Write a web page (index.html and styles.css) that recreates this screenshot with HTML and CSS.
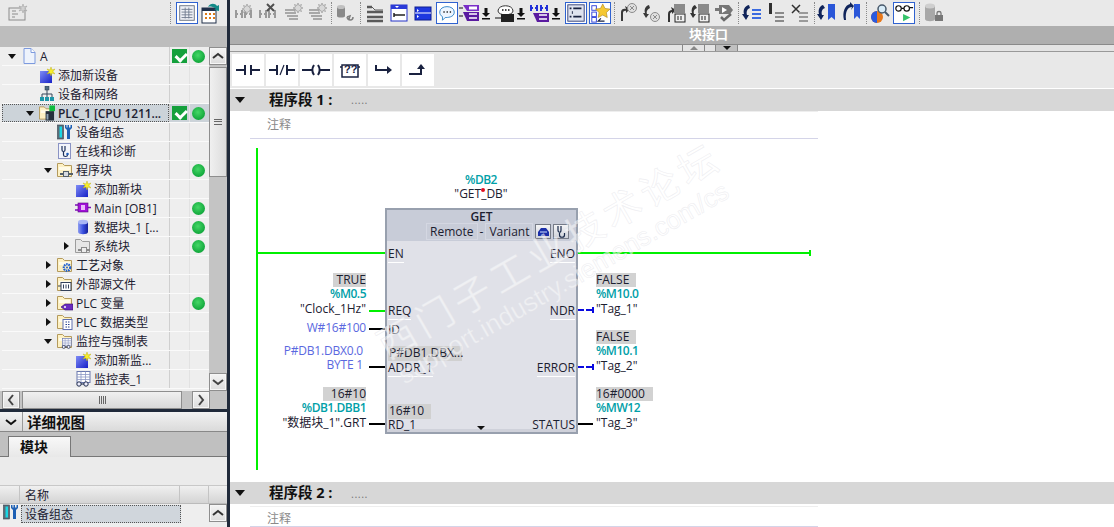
FILE: index.html
```html
<!DOCTYPE html>
<html lang="zh-CN">
<head>
  <meta charset="utf-8">
  <title>TIA Portal - GET</title>
  <link rel="stylesheet" href="styles.css">
</head>
<body>
  <svg class="defs" width="0" height="0">
    <defs>
      <linearGradient id="blue" x1="0" y1="0" x2="1" y2="1"><stop offset="0" stop-color="#7f8cf5"/><stop offset="1" stop-color="#1620c8"/></linearGradient>
      <linearGradient id="cyl" x1="0" y1="0" x2="1" y2="0"><stop offset="0" stop-color="#8d9cf0"/><stop offset=".5" stop-color="#3a50e0"/><stop offset="1" stop-color="#14209a"/></linearGradient>
      <symbol id="i-doc" viewBox="0 0 16 16"><path d="M3 .5h7l4 4v11H3z" fill="#eef3fc" stroke="#7d9ade"/><path d="M10 .5v4h4" fill="#fff" stroke="#7d9ade"/></symbol>
      <symbol id="i-add" viewBox="0 0 16 16"><rect x="1" y="4" width="12" height="12" fill="url(#blue)"/><path d="M12 0l1 3 3-1-2 2.500 2 2.500-3-1-1 3-1-3-3 1 2-2.500-2-2.500 3 1z" fill="#f7ee2c" stroke="#b9a900" stroke-width=".4"/></symbol>
      <symbol id="i-net" viewBox="0 0 16 16"><path d="M8 4v4M3 12V8h10v4M8 8v4" fill="none" stroke="#36465a"/><rect x="6" y="0" width="4" height="4" fill="#4f6a80" stroke="#26384a" stroke-width=".5"/><rect x="1" y="11" width="4" height="4" fill="#1d96a8"/><rect x="6" y="11" width="4" height="4" fill="#1d96a8"/><rect x="11" y="11" width="4" height="4" fill="#1d96a8"/></symbol>
      <symbol id="i-folder" viewBox="0 0 16 16"><path d="M.5 14.500V1.500h5l2 2h7v11z" fill="#fdf1c4" stroke="#b49a5c"/><path d="M2 5h11v3H2z" fill="#fffbe8"/></symbol>
      <symbol id="i-plc" viewBox="0 0 17 16"><use href="#i-folder" width="16" height="16"/><rect x="7" y="6" width="9" height="10" fill="#25303c"/><rect x="8" y="9" width="2" height="6" fill="#8fa4b5"/><rect x="11" y="0" width="6" height="6" fill="#0dbb3c"/></symbol>
      <symbol id="i-cfg" viewBox="0 0 16 16"><rect x=".5" y="1" width="6" height="14" fill="#5b6c78" stroke="#33424e" stroke-width=".6"/><rect x="2.500" y="2.500" width="2.500" height="11" fill="#19d6e4"/><path d="M8 1v3l2 2v9h3V6l2-2V1l-1.500 0v2.500h-1.500V1h-1.500v2.500H9.500V1z" fill="#1e60b4"/></symbol>
      <symbol id="i-diag" viewBox="0 0 16 16"><rect x="1.500" y=".5" width="12" height="15" fill="#f2f4fb" stroke="#8a93c4"/><path d="M5 3v4c0 2 3 2 3 0V3M6.500 9v3c0 2 4 2 4 0" fill="none" stroke="#1c2f5a" stroke-width="1.200"/><circle cx="10.500" cy="11" r="1.300" fill="#1c5ab8"/></symbol>
      <symbol id="i-prog" viewBox="0 0 16 16"><use href="#i-folder" width="16" height="16"/><path d="M3 11h3v-2h6v2h4v2h-4v2H6v-2H3z" fill="#55606a"/><rect x="7" y="10" width="4" height="4" fill="#d8dce0"/></symbol>
      <symbol id="i-main" viewBox="0 0 16 16"><path d="M0 5h4M0 10h4M12 7.500h4" stroke="#7d10b8" stroke-width="1.500"/><rect x="3" y="3" width="10" height="9" fill="#a210d8" stroke="#560a80" stroke-width=".6"/><rect x="6" y="5" width="4" height="5" fill="#e9b8fb"/></symbol>
      <symbol id="i-db" viewBox="0 0 16 16"><path d="M3 3v10c0 3 10 3 10 0V3z" fill="url(#cyl)"/><ellipse cx="8" cy="3" rx="5" ry="2.300" fill="#a9b6f5"/></symbol>
      <symbol id="i-sys" viewBox="0 0 16 16"><path d="M.5 14.500V1.500h5l2 2h7v11z" fill="#e6e6e6" stroke="#9c9c9c"/><path d="M3 11h3v-2h6v2h3v2h-3v2H6v-2H3z" fill="#8a8a8a"/><rect x="7" y="10" width="4" height="4" fill="#ececec"/></symbol>
      <symbol id="i-tech" viewBox="0 0 16 16"><use href="#i-folder" width="16" height="16"/><circle cx="10" cy="10.500" r="3.200" fill="none" stroke="#1d5ed0" stroke-width="2.200" stroke-dasharray="1.600 .7"/><circle cx="10" cy="10.500" r="1" fill="#1d5ed0"/></symbol>
      <symbol id="i-src" viewBox="0 0 16 16"><use href="#i-folder" width="16" height="16"/><path d="M1 10h3" stroke="#33415a"/><rect x="4" y="6.500" width="10" height="8" fill="#fff" stroke="#33415a"/><path d="M6.500 8.500v4M9 8.500v4M11.500 8.500v4" stroke="#33415a"/></symbol>
      <symbol id="i-tag" viewBox="0 0 16 16"><use href="#i-folder" width="16" height="16"/><path d="M4 12l4-3h8v6H8z" fill="#6a2cc0" stroke="#37106e" stroke-width=".6"/><circle cx="8" cy="12" r="1" fill="#fff"/></symbol>
      <symbol id="i-type" viewBox="0 0 16 16"><use href="#i-folder" width="16" height="16"/><rect x="6" y="5.500" width="9" height="10" fill="#fff" stroke="#6070b0"/><path d="M8.500 8h4M8.500 10.500h4M8.500 13h4" stroke="#24408c" stroke-dasharray="1.500 1"/></symbol>
      <symbol id="i-table" viewBox="0 0 16 16"><rect x="2" y=".5" width="13" height="11" fill="#fff" stroke="#6a78ae"/><path d="M2 3.500h13M2 6h13M2 8.500h13M6 .5v11M10.500.5v11" stroke="#8b97c4" stroke-width=".8"/><circle cx="4" cy="13" r="2.200" fill="#eef" stroke="#1d2a4a"/><circle cx="11" cy="13" r="2.200" fill="#eef" stroke="#1d2a4a"/><path d="M6 13h3" stroke="#1d2a4a"/></symbol>
      <symbol id="i-watch" viewBox="0 0 16 16"><use href="#i-folder" width="16" height="16"/><use href="#i-table" x="3" y="5" width="13" height="11"/></symbol>

      <symbol id="t-gray-star" viewBox="0 0 22 22"><rect x="3" y="6" width="16" height="12" fill="#e8e8e8" stroke="#8c8c8c"/><path d="M6 9h4M6 12h6M6 15h3" stroke="#8c8c8c"/><path d="M17 2l1 3 3-1-2 2.500 2 2.500-3-1-1 3-1-3-3 1 2-2.500-2-2.500 3 1z" fill="#d0d0d0" stroke="#9a9a9a" stroke-width=".5"/></symbol>
      <symbol id="t-list" viewBox="0 0 22 22"><rect x="3" y="3" width="16" height="16" fill="#eef0f5" stroke="#666f80"/><path d="M5 7h12M5 10h12M5 13h12M5 16h12M9 5v12M13 5v12" stroke="#727c90"/></symbol>
      <symbol id="t-export" viewBox="0 0 22 22"><rect x="2" y="6" width="14" height="15" fill="#fff" stroke="#20304a"/><rect x="2" y="6" width="14" height="3" fill="#20304a"/><path d="M5 11h2v2H5zM9 11h2v2H9zM13 11h2v2h-2zM5 15h2v2H5zM9 15h2v2H9zM13 15h2v2h-2z" fill="#dc7a18"/><path d="M8 5C10 1 15 1 17 4l2-1v6l-5-1 2-1c-2-2-5-3-8-2z" fill="#128a88"/></symbol>
      <symbol id="t-bstar" viewBox="0 0 22 22"><path d="M2 8v8M8 8v8M2 12h2M6 12h2M11 8v8M17 8v8M11 12h2M15 12h2" stroke="#9a9a9a" stroke-width="2"/><path d="M13 2l1 2.500 2.500-1-1 2.500 2.500 1-2.500 1 1 2.500-2.500-1-1 2.500-1-2.500-2.500 1 1-2.500-2.500-1 2.500-1-1-2.500 2.500 1z" fill="#d8d8d8" stroke="#909090" stroke-width=".6"/></symbol>
      <symbol id="t-bx" viewBox="0 0 22 22"><path d="M2 8v8M8 8v8M2 12h2M6 12h2M11 8v8M17 8v8M11 12h2M15 12h2" stroke="#9a9a9a" stroke-width="2"/><path d="M9 2l7 7M16 2l-7 7" stroke="#505050" stroke-width="2"/></symbol>
      <symbol id="t-lstar" viewBox="0 0 22 22"><path d="M3 8h11M3 11h11M5 14h11M7 17h9" stroke="#a8a8a8" stroke-width="2"/><path d="M16 1l1 2.500 2.500-1-1 2.500 2.500 1-2.500 1 1 2.500-2.500-1-1 2.500-1-2.500-2.500 1 1-2.500-2.500-1 2.500-1-1-2.500 2.500 1z" fill="#d8d8d8" stroke="#909090" stroke-width=".6"/></symbol>
      <symbol id="t-undo" viewBox="0 0 22 22"><path d="M3 5v9c0 2 8 2 8 0V5z" fill="#8a8a8a"/><ellipse cx="7" cy="5" rx="4" ry="2" fill="#c0c0c0"/><path d="M13 15c1 4 6 4 6 0M13 15l3-1-1 3" fill="none" stroke="#808080" stroke-width="1.500"/></symbol>
      <symbol id="t-lines" viewBox="0 0 22 22"><path d="M3 5h5M3 10h16M3 15h16M3 19h16" stroke="#5a5a5a" stroke-width="2.500"/><path d="M8 5l3 3h8" fill="none" stroke="#5a5a5a"/></symbol>
      <symbol id="t-net1" viewBox="0 0 22 22"><rect x="3" y="3" width="16" height="16" fill="#fff" stroke="#2433c8"/><rect x="3" y="3" width="16" height="4" fill="#2a3ad8"/><path d="M7 4l4 0-2 2z" fill="#fff"/><path d="M6 13h11M6 11v4" stroke="#222" stroke-width="1.500"/></symbol>
      <symbol id="t-net2" viewBox="0 0 22 22"><rect x="3" y="5" width="16" height="13" fill="#1e38e0" stroke="#0e1e90"/><path d="M3 11h16" stroke="#fff"/><path d="M5 7l2 1.500-2 1.500zM5 13l2 1.500-2 1.500z" fill="#fff"/></symbol>
      <symbol id="t-bubble" viewBox="0 0 22 22"><path d="M3 10c0-8 16-8 16 0 0 6-8 6-10 6l-3 3v-4c-2-1-3-3-3-5z" fill="#eef6ff" stroke="#2a80c8"/><path d="M7 10h1.500M10.500 10h1.500M14 10h1.500" stroke="#222" stroke-width="1.600"/></symbol>
      <symbol id="t-tag" viewBox="0 0 22 22"><path d="M4 3h16v6H8z" fill="#7a2fc8"/><rect x="10" y="4.500" width="8" height="3" fill="#fff"/><path d="M4 10h16v9H8z" fill="#5a1aa0"/><path d="M10 12h8M10 16h8" stroke="#fff" stroke-width="1.500"/><path d="M0 6h4M0 14h4" stroke="#111"/></symbol>
      <symbol id="t-chat" viewBox="0 0 22 22"><path d="M4 9c0-7 15-7 15 0 0 5-15 5-15 0z" fill="#fff" stroke="#333"/><path d="M8 8h1.500M11 8h1.500M14 8h1.500" stroke="#111" stroke-width="1.500"/><rect x="7" y="12" width="13" height="8" fill="#222"/><path d="M1 16h6" stroke="#111"/></symbol>
      <symbol id="t-bltag" viewBox="0 0 22 22"><path d="M2 3v6M8 3v6M2 6h2M6 6h2M12 3v6M18 3v6M12 6h2M16 6h2" stroke="#2030d8" stroke-width="2"/><path d="M4 11h16v9H8z" fill="#5a1aa0"/><path d="M10 13h8M10 17h8" stroke="#fff" stroke-width="1.500"/></symbol>
      <symbol id="t-down" viewBox="0 0 10 14"><path d="M3.500 2h3v5H9L5 11 1 7h2.500zM1 12h8v1.500H1z" fill="#111"/></symbol>
      <symbol id="t-detail" viewBox="0 0 22 22"><rect x="2" y="2" width="18" height="18" fill="#dfe3ee" stroke="#2c3a72"/><path d="M4 6h2M4 15h2M8 6h9M8 15h9" stroke="#1a2340" stroke-width="2"/><path d="M7 9v3" stroke="#1a2340"/></symbol>
      <symbol id="t-fav" viewBox="0 0 22 22"><rect x="2" y="3" width="5" height="5" fill="#fff" stroke="#2a3ad8"/><rect x="2" y="10" width="5" height="5" fill="#fff" stroke="#2a3ad8"/><rect x="2" y="16" width="5" height="5" fill="#fff" stroke="#2a3ad8"/><path d="M14 1l2.500 5 5.500.7-4 3.800 1 5.500-5-2.700-5 2.700 1-5.500-4-3.800 5.500-.7z" fill="#f5c832" stroke="#a07a10" stroke-width=".6"/><path d="M16 20H9l3-3" fill="none" stroke="#1a2340" stroke-width="1.300"/></symbol>
      <symbol id="t-rcirc" viewBox="0 0 22 22"><path d="M4 19V10c0-3 3-4 5-3L8 4l5 3-4 4V9c-1-.5-3 0-3 2v8z" fill="#3a3a3a"/><circle cx="15" cy="6" r="4.500" fill="#e0e0e0" stroke="#8c8c8c"/><path d="M13 4l4 4M17 4l-4 4" stroke="#8c8c8c"/></symbol>
      <symbol id="t-lcirc" viewBox="0 0 22 22"><path d="M8 3c-4 1-5 5-4 8l-2 0 3 5 3-4-2 0c-1-3 1-5 3-6z" fill="#3a3a3a"/><circle cx="14" cy="15" r="4.500" fill="#e0e0e0" stroke="#8c8c8c"/><path d="M12 13l4 4M16 13l-4 4" stroke="#8c8c8c"/></symbol>
      <symbol id="t-rsq" viewBox="0 0 22 22"><path d="M3 20v-8c0-3 2-4 4-4L6 5l5 3-4 4v-2c-1 0-2 1-2 2v8z" fill="#333"/><rect x="9" y="2" width="11" height="9" fill="#8a8a8a"/><rect x="10" y="12" width="10" height="8" fill="#f0f0f0" stroke="#222"/><path d="M13 14v4M16 14v4" stroke="#222"/></symbol>
      <symbol id="t-lsq" viewBox="0 0 22 22"><path d="M6 3C3 4 2 8 3 11L1 11l3 5 3-4-2 0c-1-3 0-5 3-6z" fill="#333"/><rect x="9" y="2" width="11" height="9" fill="#8a8a8a"/><rect x="10" y="12" width="10" height="8" fill="#f0f0f0" stroke="#222"/><path d="M13 14v4M16 14v4" stroke="#222"/></symbol>
      <symbol id="t-play" viewBox="0 0 22 22"><path d="M2 6h4V3h10l4 5-3 4H6V9H2z" fill="#777"/><path d="M9 5l5 3-5 3z" fill="#fff"/><path d="M8 15l3 3 7-6" fill="none" stroke="#6a6a6a" stroke-width="2.500"/></symbol>
      <symbol id="t-lblue" viewBox="0 0 22 22"><path d="M8 3C3 4 2 9 3 12L1 12l4 6 3-5-2 0C5 10 6 7 9 6z" fill="#10245a"/><path d="M11 8h9M11 12h9M11 16h9" stroke="#3a6ae0" stroke-width="2.200"/></symbol>
      <symbol id="t-bar" viewBox="0 0 22 22"><rect x="4" y="1" width="3" height="11" fill="#303030"/><path d="M10 11h9M10 15h9M10 19h9" stroke="#8a8a8a" stroke-width="2.200"/></symbol>
      <symbol id="t-barx" viewBox="0 0 22 22"><path d="M3 3l8 8M3 11l8-8" stroke="#303030" stroke-width="1.500"/><path d="M10 11h9M10 15h9M10 19h9" stroke="#9a9a9a" stroke-width="2.200"/></symbol>
      <symbol id="t-lbm" viewBox="0 0 22 22"><path d="M6 3C2 4 1 9 2 12L0 12l4 6 3-5-2 0C4 10 5 7 8 6z" fill="#10245a"/><path d="M11 2h7v16l-3.500-3-3.500 3z" fill="#2a56d8"/></symbol>
      <symbol id="t-rbm" viewBox="0 0 22 22"><path d="M11 5C7 5 4 9 5 18H3C1 10 4 3 9 2V0l4 4-3 4z" fill="#10245a"/><path d="M13 2h6v15l-3-3-3 3z" fill="#2a56d8"/></symbol>
      <symbol id="t-search" viewBox="0 0 22 22"><circle cx="8" cy="15" r="6" fill="#e8781a"/><path d="M8 9a6 6 0 0 0 0 12z" fill="#2a5ae0"/><circle cx="13" cy="7" r="4" fill="#d8ecf8" stroke="#47586a" stroke-width="1.500"/><path d="M16 10l4 4" stroke="#47586a" stroke-width="2"/></symbol>
      <symbol id="t-glass" viewBox="0 0 22 22"><circle cx="5" cy="6" r="3" fill="#fff" stroke="#111" stroke-width="1.300"/><circle cx="14" cy="6" r="3" fill="#fff" stroke="#111" stroke-width="1.300"/><path d="M8 6h3M17 5h4" stroke="#111" stroke-width="1.300"/><path d="M10 12l8 4-8 4z" fill="#35c46a"/></symbol>
      <symbol id="t-lockdb" viewBox="0 0 22 22"><path d="M2 4v13c0 3 10 3 10 0V4z" fill="#a8a8a8"/><ellipse cx="7" cy="4" rx="5" ry="2.500" fill="#cfcfcf"/><rect x="12" y="13" width="8" height="6" fill="#777"/><path d="M14 13v-2c0-2 4-2 4 0v2" fill="none" stroke="#777" stroke-width="1.300"/></symbol>
    </defs>
  </svg>

  <div class="app">
    <aside class="project">
      <div class="toolbar">
        <svg class="tb tb-first"><use href="#t-gray-star"/></svg>
        <span class="sep sep-left"></span>
        <span class="tb-on"><svg class="tb"><use href="#t-list"/></svg></span>
        <svg class="tb"><use href="#t-export"/></svg>
      </div>
      <div class="tree-head"></div>

      <div class="tree-wrap">
        <div class="tree">
          <div class="row lv0"><div class="name"><span class="arrow open"></span><svg class="ico"><use href="#i-doc"/></svg><span>A</span></div><div class="st"><span class="check"></span></div><div class="st"><span class="dot"></span></div></div>
          <div class="row lv1"><div class="name"><span class="arrow"></span><svg class="ico"><use href="#i-add"/></svg><span>添加新设备</span></div><div class="st"></div><div class="st"></div></div>
          <div class="row lv1"><div class="name"><span class="arrow"></span><svg class="ico"><use href="#i-net"/></svg><span>设备和网络</span></div><div class="st"></div><div class="st"></div></div>
          <div class="row lv1 sel"><div class="name"><span class="arrow open"></span><svg class="ico"><use href="#i-plc"/></svg><span class="plc-name">PLC_1 [CPU 1211...</span></div><div class="st"><span class="check"></span></div><div class="st"><span class="dot"></span></div></div>
          <div class="row lv2"><div class="name"><span class="arrow"></span><svg class="ico"><use href="#i-cfg"/></svg><span>设备组态</span></div><div class="st"></div><div class="st"></div></div>
          <div class="row lv2"><div class="name"><span class="arrow"></span><svg class="ico"><use href="#i-diag"/></svg><span>在线和诊断</span></div><div class="st"></div><div class="st"></div></div>
          <div class="row lv2"><div class="name"><span class="arrow open"></span><svg class="ico"><use href="#i-prog"/></svg><span>程序块</span></div><div class="st"></div><div class="st"><span class="dot"></span></div></div>
          <div class="row lv3"><div class="name"><span class="arrow"></span><svg class="ico"><use href="#i-add"/></svg><span>添加新块</span></div><div class="st"></div><div class="st"></div></div>
          <div class="row lv3"><div class="name"><span class="arrow"></span><svg class="ico"><use href="#i-main"/></svg><span>Main [OB1]</span></div><div class="st"></div><div class="st"><span class="dot"></span></div></div>
          <div class="row lv3"><div class="name"><span class="arrow"></span><svg class="ico"><use href="#i-db"/></svg><span>数据块_1 [...</span></div><div class="st"></div><div class="st"><span class="dot"></span></div></div>
          <div class="row lv3"><div class="name"><span class="arrow closed"></span><svg class="ico"><use href="#i-sys"/></svg><span>系统块</span></div><div class="st"></div><div class="st"><span class="dot"></span></div></div>
          <div class="row lv2"><div class="name"><span class="arrow closed"></span><svg class="ico"><use href="#i-tech"/></svg><span>工艺对象</span></div><div class="st"></div><div class="st"></div></div>
          <div class="row lv2"><div class="name"><span class="arrow closed"></span><svg class="ico"><use href="#i-src"/></svg><span>外部源文件</span></div><div class="st"></div><div class="st"></div></div>
          <div class="row lv2"><div class="name"><span class="arrow closed"></span><svg class="ico"><use href="#i-tag"/></svg><span>PLC 变量</span></div><div class="st"></div><div class="st"><span class="dot"></span></div></div>
          <div class="row lv2"><div class="name"><span class="arrow closed"></span><svg class="ico"><use href="#i-type"/></svg><span>PLC 数据类型</span></div><div class="st"></div><div class="st"></div></div>
          <div class="row lv2"><div class="name"><span class="arrow open"></span><svg class="ico"><use href="#i-watch"/></svg><span>监控与强制表</span></div><div class="st"></div><div class="st"></div></div>
          <div class="row lv3"><div class="name"><span class="arrow"></span><svg class="ico"><use href="#i-add"/></svg><span>添加新监...</span></div><div class="st"></div><div class="st"></div></div>
          <div class="row lv3"><div class="name"><span class="arrow"></span><svg class="ico"><use href="#i-table"/></svg><span>监控表_1</span></div><div class="st"></div><div class="st"></div></div>
        </div>
        <div class="vscroll">
          <div class="sb-btn"><svg width="12" height="8" viewBox="0 0 12 8"><path d="M1 6l5-4 5 4" fill="none" stroke="#333" stroke-width="2"/></svg></div>
          <div class="sb-thumb"><span class="grip"></span></div>
          <div class="sb-space"></div>
          <div class="sb-btn"><svg width="12" height="8" viewBox="0 0 12 8"><path d="M1 2l5 4 5-4" fill="none" stroke="#444" stroke-width="2"/></svg></div>
        </div>
      </div>

      <div class="hscroll">
        <div class="sb-btn"><svg width="8" height="12" viewBox="0 0 8 12"><path d="M6 1L2 6l4 5" fill="none" stroke="#444" stroke-width="2"/></svg></div>
        <div class="hs-thumb"><span class="grip-v"></span></div>
        <div class="sb-btn hs-right"><svg width="8" height="12" viewBox="0 0 8 12"><path d="M2 1l4 5-4 5" fill="none" stroke="#444" stroke-width="2"/></svg></div>
      </div>

      <div class="pane-split"></div>

      <div class="detail-head">
        <div class="chev"><svg width="12" height="8" viewBox="0 0 12 8"><path d="M1 2l5 4 5-4" fill="none" stroke="#111" stroke-width="2"/></svg></div>
        <span>详细视图</span>
      </div>
      <div class="tabs"><div class="tab">模块</div></div>
      <div class="detail-space"></div>
      <div class="dt-head"><div class="c0"></div><div class="c1">名称</div><div class="c2"></div></div>
      <div class="dt-row">
        <svg class="ico dt-ico"><use href="#i-cfg"/></svg>
        <div class="dt-name">设备组态</div>
        <div class="sb-btn dt-btn"><svg width="12" height="8" viewBox="0 0 12 8"><path d="M1 6l5-4 5 4" fill="none" stroke="#333" stroke-width="2"/></svg></div>
      </div>
    </aside>

    <div class="divider"></div>

    <main class="editor">
      <div class="toolbar">
        <svg class="tb"><use href="#t-bstar"/></svg>
        <svg class="tb"><use href="#t-bx"/></svg>
        <svg class="tb"><use href="#t-lstar"/></svg>
        <svg class="tb"><use href="#t-lstar"/></svg>
        <span class="sep"></span>
        <svg class="tb"><use href="#t-undo"/></svg>
        <span class="sep sep-wide"></span>
        <svg class="tb"><use href="#t-lines"/></svg>
        <svg class="tb"><use href="#t-net1"/></svg>
        <svg class="tb"><use href="#t-net2"/></svg>
        <span class="tb-on"><svg class="tb"><use href="#t-bubble"/></svg></span>
        <svg class="tb tb-tight"><use href="#t-tag"/></svg><svg class="down"><use href="#t-down"/></svg>
        <svg class="tb tb-tight"><use href="#t-chat"/></svg><svg class="down"><use href="#t-down"/></svg>
        <svg class="tb tb-tight"><use href="#t-bltag"/></svg><svg class="down"><use href="#t-down"/></svg>
        <span class="tb-on"><svg class="tb"><use href="#t-detail"/></svg></span>
        <span class="tb-on"><svg class="tb"><use href="#t-fav"/></svg></span>
        <span class="sep"></span>
        <svg class="tb"><use href="#t-rcirc"/></svg>
        <svg class="tb"><use href="#t-lcirc"/></svg>
        <svg class="tb"><use href="#t-rsq"/></svg>
        <svg class="tb"><use href="#t-lsq"/></svg>
        <svg class="tb"><use href="#t-play"/></svg>
        <span class="sep"></span>
        <svg class="tb"><use href="#t-lblue"/></svg>
        <svg class="tb"><use href="#t-bar"/></svg>
        <svg class="tb"><use href="#t-barx"/></svg>
        <span class="sep"></span>
        <svg class="tb"><use href="#t-lbm"/></svg>
        <svg class="tb"><use href="#t-rbm"/></svg>
        <span class="sep"></span>
        <svg class="tb"><use href="#t-search"/></svg>
        <span class="tb-on"><svg class="tb"><use href="#t-glass"/></svg></span>
        <span class="sep sep-wide"></span>
        <svg class="tb"><use href="#t-lockdb"/></svg>
      </div>

      <div class="iface-head">块接口</div>
      <div class="iface-strip">
        <span class="handle"><i class="tri-up"></i></span>
        <span class="handle handle-on"><i class="tri-down"></i></span>
      </div>

      <div class="lad-bar">
        <button class="lad-btn"><svg width="24" height="12" viewBox="0 0 24 12"><path d="M0 6h9M9 1v10M15 1v10M15 6h9" fill="none" stroke="#1a2240" stroke-width="2"/></svg></button>
        <button class="lad-btn"><svg width="26" height="12" viewBox="0 0 26 12"><path d="M0 6h8M8 1v10M18 1v10M18 6h8" fill="none" stroke="#1a2240" stroke-width="2"/><path d="M11 11l4-10" stroke="#1a2240" stroke-width="1.200"/></svg></button>
        <button class="lad-btn"><svg width="28" height="12" viewBox="0 0 28 12"><path d="M0 6h11M17 6h11M12 1c-2 3-2 7 0 10M16 1c2 3 2 7 0 10" fill="none" stroke="#1a2240" stroke-width="2"/></svg></button>
        <button class="lad-btn"><svg width="20" height="16" viewBox="0 0 20 16"><path d="M2 3h16v12H2z" fill="#fff" stroke="#1a2240" stroke-width="1.500"/><path d="M0 5h2M18 5h2" stroke="#1a2240" stroke-width="1.500"/></svg><span class="qq">??</span></button>
        <button class="lad-btn"><svg width="18" height="12" viewBox="0 0 18 12"><path d="M1 1v5h11" fill="none" stroke="#1a2240" stroke-width="2"/><path d="M12 2l5 4-5 4z" fill="#1a2240"/></svg></button>
        <button class="lad-btn"><svg width="18" height="12" viewBox="0 0 18 12"><path d="M0 10h12V5" fill="none" stroke="#1a2240" stroke-width="2"/><path d="M8 5l4-5 4 5z" fill="#1a2240"/></svg></button>
      </div>

      <div class="net-head">
        <span class="tri"></span><b>程序段 1 :</b><span class="dots">.....</span>
      </div>
      <div class="net-body">
        <div class="comment">注释</div>
        <div class="canvas">
          <div class="rail"></div>
          <div class="wire on w-en"></div>
          <div class="wire on w-eno"></div>
          <div class="tick"></div>
          <div class="wire on w-req"></div>
          <div class="wire w-id"></div>
          <div class="wire w-addr"></div>
          <div class="wire w-rd"></div>
          <div class="wire off w-ndr"></div>
          <div class="wire off w-err"></div>
          <div class="wire w-status"></div>

          <div class="inst"><div class="tag">%DB2</div><div>"GET_DB"</div><span class="red-dot"></span></div>

          <div class="params lft p-req"><div class="val v33">TRUE</div><div class="tag">%M0.5</div><div>"Clock_1Hz"</div></div>
          <div class="params lft p-id"><div class="const">W#16#100</div></div>
          <div class="params lft p-addr"><div class="const">P#DB1.DBX0.0</div><div class="const">BYTE 1</div></div>
          <div class="params lft p-rd"><div class="val v43">16#10</div><div class="tag">%DB1.DBB1</div><div>"数据块_1".GRT</div></div>

          <div class="params rgt p-req"><div class="val v40">FALSE</div><div class="tag">%M10.0</div><div>"Tag_1"</div></div>
          <div class="params rgt p-err"><div class="val v40">FALSE</div><div class="tag">%M10.1</div><div>"Tag_2"</div></div>
          <div class="params rgt p-rd"><div class="val v57">16#0000</div><div class="tag">%MW12</div><div>"Tag_3"</div></div>

          <div class="block">
            <div class="block-head">
              <div class="block-title">GET</div>
              <div class="block-opts">
                <span class="opt">Remote</span><span>-</span><span class="opt">Variant</span>
                <span class="opt-btn"><svg width="13" height="11" viewBox="0 0 13 11"><path d="M1 10V6l3-4h5l3 4v4z" fill="#1a2ea8"/><path d="M3 6h7" stroke="#cfe0ff"/></svg></span>
                <span class="opt-btn"><svg width="13" height="13" viewBox="0 0 13 13"><path d="M3 1v4c0 3 3 3 3 0V1M4.500 8v2c0 3 5 3 5 0V8" fill="none" stroke="#1a2a4a" stroke-width="1.200"/></svg></span>
              </div>
            </div>
            <div class="pin in t-en line">EN</div>
            <div class="pin out t-en line">ENO</div>
            <div class="pin in t-req line">REQ</div>
            <div class="pin out t-req line">NDR</div>
            <div class="pin in t-id">ID</div>
            <div class="pin in t-addr-v pin-val">P#DB1.DBX...</div>
            <div class="pin in t-addr line">ADDR_1</div>
            <div class="pin out t-addr line">ERROR</div>
            <div class="pin in t-rd-v pin-val pin-val-s">16#10</div>
            <div class="pin in t-rd">RD_1</div>
            <div class="pin out t-rd">STATUS</div>
            <span class="more"></span>
          </div>

          <div class="mark mark-cn">西门子工业技术论坛</div>
          <div class="mark mark-en">support.industry.siemens.com/cs</div>
        </div>
      </div>

      <div class="net-head">
        <span class="tri"></span><b>程序段 2 :</b><span class="dots">.....</span>
      </div>
      <div class="comment comment-2">注释</div>
    </main>
  </div>
</body>
</html>
```

FILE: styles.css
```css
* {
  box-sizing: border-box;
}

html, body {
  margin: 0;
  height: 527px;
  overflow: hidden;
}

body {
  font-family: "Open Sans", "Noto Sans CJK SC", sans-serif;
  font-size: 12px;
  color: #1c2030;
  background: #fff;
}

.defs {
  position: absolute;
}

.app {
  display: flex;
  height: 527px;
}

/* toolbars */
.toolbar {
  display: flex;
  align-items: center;
  height: 26px;
  padding-left: 3px;
  background: #e9e9e9;
}

.tb {
  display: block;
  flex: none;
  width: 22px;
  height: 22px;
  margin: 0 1px;
}

.tb-first {
  margin-left: 3px;
}

.tb-tight {
  margin: 0;
}

.tb-on {
  flex: none;
  width: 22px;
  height: 22px;
  margin: 0 1px;
  background: #fff;
  border: 1px solid #2f62d0;
}

.tb-on .tb {
  width: 20px;
  height: 20px;
  margin: 0;
}

.down {
  flex: none;
  width: 10px;
  height: 14px;
  margin-right: 3px;
}

.sep {
  flex: none;
  width: 1px;
  height: 22px;
  margin: 0 1.500px;
  border-left: 1px dotted #8a8a8a;
}

.sep-wide {
  margin: 0 2.500px;
}

.sep-left {
  margin-left: 141px;
  margin-right: 4px;
}

/* left pane */
.project {
  flex: none;
  width: 227px;
  display: flex;
  flex-direction: column;
  background: #eee;
}

.divider {
  flex: none;
  width: 3px;
  background: #202a3a;
}

.tree-head {
  height: 21px;
  background: #bdbdbd;
}

.tree-wrap {
  display: flex;
  height: 344px;
  overflow: hidden;
}

.tree {
  flex: none;
  width: 209px;
  padding-left: 2px;
  background: #eee;
}

.row {
  display: flex;
  height: 19px;
  border-bottom: 1px solid #fafafa;
}

.name {
  display: flex;
  align-items: center;
  flex: none;
  width: 167px;
  white-space: nowrap;
  overflow: hidden;
  border: 1px solid transparent;
}

.lv1 .name { padding-left: 18px; }
.lv2 .name { padding-left: 37px; }
.lv3 .name { padding-left: 55px; }

.st {
  flex: none;
  width: 20px;
  display: flex;
  align-items: center;
  justify-content: center;
  border-left: 1px solid #cfcfcf;
}

.st + .st {
  padding-right: 2px;
  border-left-color: #e2e2e2;
}

.sel {
  background: #ccd3d9;
}

.sel .name {
  border: 1px dotted #555;
}

.plc-name {
  font-weight: 600;
  letter-spacing: -.1px;
}

.arrow {
  flex: none;
  width: 18px;
  display: flex;
  justify-content: center;
}

.lv2 .arrow, .lv3 .arrow {
  margin-left: -1px;
}

.arrow.open::before {
  content: "";
  border: 4px solid transparent;
  border-top: 5px solid #111;
  border-bottom: 0;
}

.arrow.closed::before {
  content: "";
  border: 4px solid transparent;
  border-left: 5px solid #111;
  border-right: 0;
}

.ico {
  flex: none;
  width: 16px;
  height: 16px;
  margin-right: 3px;
}

.check {
  display: block;
  width: 15px;
  height: 14px;
  background: #14a03c;
  position: relative;
}

.check::after {
  content: "";
  position: absolute;
  left: 3px;
  top: 1px;
  width: 8px;
  height: 5px;
  border-left: 3px solid #fff;
  border-bottom: 3px solid #fff;
  transform: rotate(-45deg) translate(-1px, 2px);
}

.dot {
  display: block;
  width: 13px;
  height: 13px;
  border-radius: 50%;
  background: radial-gradient(circle at 45% 40%, #45d766, #12a83c 70%, #0e8a30);
}

/* scroll bars */
.vscroll {
  flex: none;
  width: 18px;
  display: flex;
  flex-direction: column;
  background: #c4c4c4;
}

.sb-btn {
  flex: none;
  width: 18px;
  height: 18px;
  display: flex;
  align-items: center;
  justify-content: center;
  background: linear-gradient(#f4f4f4, #dcdcdc);
  border: 1px solid #8e8e8e;
  outline: 1px solid #f6f6f6;
  outline-offset: -2px;
}

.sb-thumb {
  height: 110px;
  margin: 2px 0 0;
  display: flex;
  align-items: center;
  justify-content: center;
  background: linear-gradient(90deg, #f0f0f0, #dcdcdc);
  border: 1px solid #8e8e8e;
}

.grip {
  width: 8px;
  height: 6px;
  border-top: 1px solid #666;
  border-bottom: 1px solid #666;
  position: relative;
}

.grip::after {
  content: "";
  position: absolute;
  left: 0;
  right: 0;
  top: 1px;
  border-top: 1px solid #666;
}

.sb-space {
  flex: 1;
}

.hscroll {
  display: flex;
  height: 18px;
  padding-left: 2px;
  background: #c4c4c4;
}

.hs-thumb {
  width: 160px;
  margin-left: 2px;
  display: flex;
  align-items: center;
  justify-content: center;
  background: linear-gradient(#f0f0f0, #d8d8d8);
  border: 1px solid #8e8e8e;
}

.grip-v {
  width: 7px;
  height: 8px;
  background: repeating-linear-gradient(90deg, #666 0 1px, transparent 1px 2px);
}

.hs-right {
  margin-left: 10px;
}

.pane-split {
  height: 3px;
  background: #202a3a;
}

/* detail view */
.detail-head {
  display: flex;
  align-items: center;
  height: 20px;
  font-size: 14.500px;
  font-weight: 700;
  color: #111;
  background: linear-gradient(#f2f2f2, #dadada);
  border-bottom: 1px solid #888;
}

.chev {
  width: 23px;
  align-self: stretch;
  display: flex;
  align-items: center;
  justify-content: center;
  margin-right: 4px;
  border-right: 1px solid #999;
}

.tabs {
  height: 25px;
  padding: 4px 0 0 8px;
  background: #c0c0c0;
  border-bottom: 1px solid #777;
}

.tab {
  width: 63px;
  height: 21px;
  line-height: 19px;
  padding-left: 11px;
  font-size: 14px;
  font-weight: 700;
  color: #111;
  background: linear-gradient(#f8f8f8, #e8e8e8);
  border: 1px solid #777;
  border-bottom: 0;
}

.detail-space {
  height: 28px;
  background: #ebebeb;
}

.dt-head {
  display: flex;
  height: 19px;
  background: linear-gradient(#f0f0f0, #d4d4d4);
  border-top: 1px solid #c8c8c8;
  border-bottom: 1px solid #bbb;
}

.dt-head .c0 {
  width: 20px;
  border-right: 1px solid #c4c4c4;
}

.dt-head .c1 {
  width: 160px;
  padding-left: 5px;
  border-right: 1px solid #c4c4c4;
}

.dt-head .c2 {
  width: 29px;
  border-right: 1px solid #c4c4c4;
}

.dt-row {
  display: flex;
  height: 20px;
  padding-left: 3px;
  background: #eee;
}

.dt-ico {
  margin-right: 2px;
}

.dt-name {
  width: 160px;
  line-height: 17px;
  padding-left: 3px;
  margin-top: 1px;
  height: 18px;
  background: #d0d6dc;
  border: 1px dotted #555;
}

.dt-btn {
  margin-left: 28px;
}

/* editor */
.editor {
  flex: 1;
  min-width: 0;
  display: flex;
  flex-direction: column;
  background: #fff;
}

.iface-head {
  height: 18px;
  line-height: 17px;
  padding-left: 459px;
  font-size: 13px;
  font-weight: 700;
  color: #fff;
  background: #afafaf;
}

.iface-strip {
  display: flex;
  height: 8px;
  padding-left: 452px;
  background: #e4e4e4;
  border-top: 1px solid #8a8a8a;
  border-bottom: 1px solid #999;
}

.handle {
  display: flex;
  justify-content: center;
  align-items: center;
  width: 23px;
  height: 6px;
  border-left: 1px solid #888;
  border-right: 1px solid #888;
}

.handle-on {
  margin-left: 10px;
  background: #c0c0c0;
}

.tri-up {
  border: 4px solid transparent;
  border-bottom: 4px solid #888;
  border-top: 0;
}

.tri-down {
  border: 4px solid transparent;
  border-top: 4px solid #111;
  border-bottom: 0;
}

.lad-bar {
  display: flex;
  gap: 2px;
  height: 36px;
  padding: 2px 0 2px 2px;
  background: #e8e8e8;
}

.lad-btn {
  position: relative;
  display: flex;
  align-items: center;
  justify-content: center;
  width: 32px;
  height: 32px;
  padding: 0;
  border: 0;
  background: #fff;
}

.qq {
  position: absolute;
  left: 10px;
  top: 9px;
  font-size: 11px;
  font-weight: 700;
  color: #1a2240;
}

.net-head {
  flex: none;
  display: flex;
  align-items: center;
  height: 22px;
  margin-top: 1px;
  padding-left: 5px;
  background: #d7d7d7;
  font-size: 14.500px;
}

.net-head b {
  width: 82px;
  line-height: 20px;
  white-space: nowrap;
  color: #111;
}

.tri {
  width: 10px;
  margin-right: 24px;
  border: 5px solid transparent;
  border-top: 6px solid #111;
  border-bottom: 0;
}

.dots {
  font-size: 11px;
  color: #777;
  letter-spacing: .5px;
}

.net-body {
  height: 372px;
  display: flex;
  flex-direction: column;
}

.comment {
  flex: none;
  width: 568px;
  height: 28px;
  margin-left: 20px;
  padding: 3px 0 0 17px;
  color: #8a8a8a;
  border-top: 1px solid #eee;
  border-bottom: 1px solid #d4d4e8;
}

.comment-2 {
  height: 21px;
  margin-top: 2px;
  padding-top: 2px;
}

/* the network itself is a free canvas */
.canvas {
  position: relative;
  flex: 1;
  overflow: hidden;
}

.rail {
  position: absolute;
  left: 26px;
  top: 9px;
  width: 2px;
  height: 322px;
  background: #00f000;
}

.wire {
  position: absolute;
  height: 2px;
  background: #000;
}

.wire.on { background: #00f000; }

.wire.off {
  background: repeating-linear-gradient(90deg, #0a0ae0 0 6px, transparent 6px 8px);
}

.w-en { left: 28px; top: 113px; width: 127px; }
.w-eno { left: 348px; top: 113px; width: 232px; }
.w-req { left: 139px; top: 171px; width: 16px; }
.w-id { left: 139px; top: 189px; width: 16px; }
.w-addr { left: 139px; top: 227px; width: 16px; }
.w-rd { left: 139px; top: 284px; width: 16px; }
.w-ndr { left: 348px; top: 170px; width: 16px; }
.w-err { left: 348px; top: 227px; width: 16px; }
.w-status { left: 348px; top: 284px; width: 15px; }

.w-ndr::after, .w-err::after {
  content: "";
  position: absolute;
  right: 0;
  top: -2px;
  width: 2px;
  height: 6px;
  background: #0a0ae0;
}

.tick {
  position: absolute;
  left: 579px;
  top: 111px;
  width: 2px;
  height: 6px;
  background: #00f000;
}

.tag {
  color: #00a0a8;
  font-weight: 600;
  letter-spacing: -.5px;
}

.const {
  color: #5a68e0;
  letter-spacing: -.2px;
}

.inst {
  position: absolute;
  left: 201px;
  top: 34px;
  width: 100px;
  line-height: 14px;
  text-align: center;
}

.red-dot {
  position: absolute;
  left: 50px;
  top: 15px;
  width: 4px;
  height: 4px;
  border-radius: 50%;
  background: #e01020;
}

.params {
  position: absolute;
  display: flex;
  flex-direction: column;
  line-height: 14.500px;
  white-space: nowrap;
}

.lft {
  right: 748px;
  align-items: flex-end;
}

.rgt {
  left: 366px;
  align-items: flex-start;
}

.p-req { top: 134px; }
.p-id { top: 182px; }
.p-addr { top: 205px; right: 751px; }
.p-rd { top: 248px; }
.p-err { top: 191px; }

.val {
  height: 14.500px;
  background: #d2d2d2;
}

.lft .val { text-align: right; }
.v33 { width: 33px; }
.v40 { width: 40px; }
.v43 { width: 43px; }
.v57 { width: 57px; }

.block {
  position: absolute;
  left: 155px;
  top: 69px;
  width: 193px;
  height: 226px;
  background: #e0e1e8;
  border: 2px solid #98a0ae;
  box-shadow: inset 0 -3px 0 #cfd1da;
}

.block-head {
  height: 31px;
  background: #c8ccd8;
  text-align: center;
}

.block-title {
  line-height: 13px;
  font-weight: 600;
}

.block-opts {
  display: flex;
  align-items: center;
  gap: 2px;
  height: 17px;
  padding-left: 39px;
}

.opt {
  padding: 0 3px;
  line-height: 15px;
  border: 1px solid #d4d7e2;
}

.opt-btn {
  display: flex;
  align-items: center;
  justify-content: center;
  width: 16px;
  height: 15px;
  background: linear-gradient(#f4f4f6, #cfd2da);
  border: 1px solid #777c88;
}

.block-opts .opt-btn:first-of-type {
  margin-left: 2px;
}

.pin {
  position: absolute;
  line-height: 14px;
  white-space: nowrap;
}

.pin.in { left: 1px; }
.pin.out { right: 1px; }

.line {
  padding-bottom: 1px;
  border-bottom: 1px solid #fff;
}

.t-en { top: 37px; }
.t-req { top: 94px; }
.t-id { top: 113px; }
.t-addr-v { top: 136px; }
.t-addr { top: 151px; }
.t-rd-v { top: 194px; }
.t-rd { top: 208px; }

.pin-val {
  width: 74px;
  height: 15px;
  padding-left: 1px;
  background: #d0d0d0;
}

.pin-val-s {
  width: 43px;
}

.more {
  position: absolute;
  left: 90px;
  top: 216px;
  border: 4px solid transparent;
  border-top: 4px solid #111;
  border-bottom: 0;
}

/* forum watermark, lies over the diagram */
.mark {
  position: absolute;
  white-space: nowrap;
  color: rgba(255, 255, 255, .5);
  -webkit-text-stroke: .6px rgba(226, 226, 232, .6);
  transform: rotate(-30deg);
  transform-origin: left center;
  pointer-events: none;
}

.mark-cn {
  left: 150px;
  top: 185px;
  font-size: 38px;
  letter-spacing: 5.300px;
  line-height: 46px;
}

.mark-en {
  left: 170px;
  top: 222px;
  font-family: "Liberation Sans", sans-serif;
  font-size: 26px;
  line-height: 32px;
}
```
